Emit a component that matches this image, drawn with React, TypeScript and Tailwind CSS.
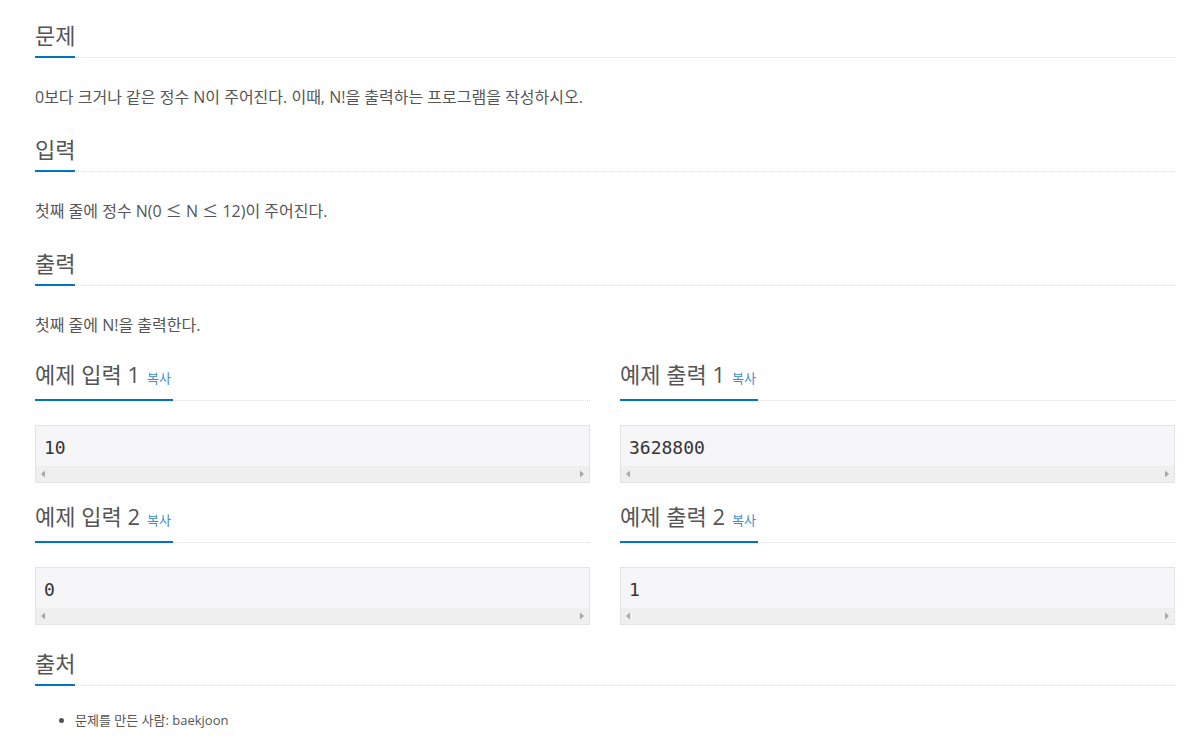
import React from 'react'

const font = { fontFamily: '"Open Sans", "Noto Sans CJK KR", sans-serif' }

function Headline({ title, copy }: { title: string; copy?: boolean }) {
  return (
    <div className="flex border-b border-dotted border-[#dedede]">
      <h2
        className={
          '-mb-px flex items-baseline border-b-2 border-[#0076c0] pb-[10px] text-[22px] leading-[22px] font-normal text-[#555] ' +
          (copy ? 'pr-[2px]' : '')
        }
      >
        <span>{title}</span>
        {copy && <span className="ml-[7px] text-[13px] text-[#3c8dcf]">복사</span>}
      </h2>
    </div>
  )
}

function Section({ title, children }: { title: string; children: React.ReactNode }) {
  return (
    <div>
      <Headline title={title} />
      <p className="mt-[28px] mb-[30px] text-[16px] leading-[22px] text-[#555]">{children}</p>
    </div>
  )
}

function SampleBox({ value }: { value: string }) {
  return (
    <div className="mt-[24px] border border-[#e3e3e3] bg-[#f6f6f8]">
      <pre
        className="h-[40px] pl-[8px] pt-[11px] text-[18px] leading-[22px] text-[#333]"
        style={{ fontFamily: '"DejaVu Sans Mono", monospace' }}
      >
        {value}
      </pre>
      <div className="flex h-[16px] items-center justify-between bg-[#efefef] px-[4px]">
        <svg width="6" height="8" viewBox="0 0 6 8">
          <path d="M5 0.5 L1 4 L5 7.5 Z" fill="#a8a8a8" />
        </svg>
        <svg width="6" height="8" viewBox="0 0 6 8">
          <path d="M1 0.5 L5 4 L1 7.5 Z" fill="#a8a8a8" />
        </svg>
      </div>
    </div>
  )
}

function Sample({ title, value }: { title: string; value: string }) {
  return (
    <div>
      <Headline title={title} copy />
      <SampleBox value={value} />
    </div>
  )
}

// the ≤ in the reference comes from the CJK font (full width)
function Le() {
  return (
    <span className="leading-none" style={{ fontFamily: '"Noto Sans CJK KR", sans-serif' }}>
      ≤
    </span>
  )
}

export default function App() {
  return (
    <div className="min-h-screen bg-white" style={font}>
      <div className="ml-[35px] w-[1140px] pt-[24px]">
        <Section title="문제">0보다 크거나 같은 정수 N이 주어진다. 이때, N!을 출력하는 프로그램을 작성하시오.</Section>
        <Section title="입력">
          첫째 줄에 정수 N(0 <Le /> N <Le /> 12)이 주어진다.
        </Section>
        <Section title="출력">첫째 줄에 N!을 출력한다.</Section>

        <div className="-mt-[3px] grid grid-cols-2 gap-x-[30px] gap-y-[22px]">
          <Sample title="예제 입력 1" value="10" />
          <Sample title="예제 출력 1" value="3628800" />
          <Sample title="예제 입력 2" value="0" />
          <Sample title="예제 출력 2" value="1" />
        </div>

        <div className="mt-[27px]">
          <Headline title="출처" />
          <ul className="mt-[24px] list-disc pl-[40px] text-[13px] leading-[20px] text-[#555]">
            <li>문제를 만든 사람: baekjoon</li>
          </ul>
        </div>
      </div>
    </div>
  )
}
